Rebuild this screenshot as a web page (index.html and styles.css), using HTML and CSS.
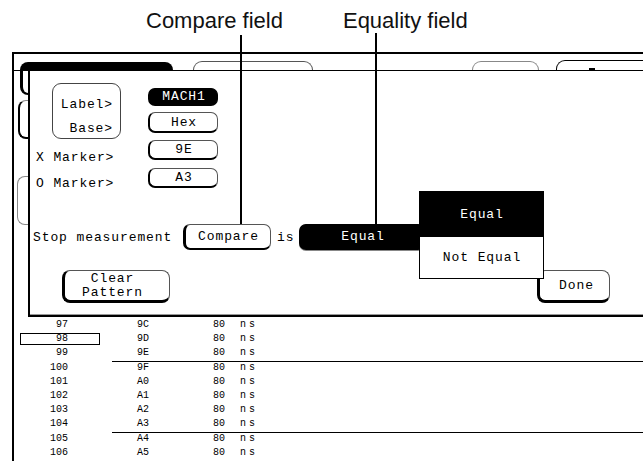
FILE: index.html
```html
<!DOCTYPE html>
<html>
<head>
<meta charset="utf-8">
<title>Stop measurement</title>
<link rel="stylesheet" href="styles.css">
</head>
<body>
<div class="page">
  <header class="callouts">
    <span class="callout">Compare field</span>
    <span class="callout callout-equality">Equality field</span>
  </header>
  <div class="pointer pointer-compare"></div>
  <div class="pointer pointer-equality"></div>
  <section class="screen">
    <div class="tabbar">
      <div class="tab tab-active"></div>
      <div class="tab tab-outline"></div>
      <div class="tab tab-faint"></div>
      <div class="tab tab-wide"><span class="tab-mark"></span></div>
    </div>
    <div class="main">
      <div class="side">
        <div class="side-btn side-1"></div>
        <div class="side-btn side-2"></div>
        <div class="side-btn side-3"></div>
      </div>
      <div class="dialog">
        <div class="fields">
          <div class="field-labels">
            <div class="labelbox">
              <div>Label&gt;</div>
              <div class="second">Base&gt;</div>
            </div>
            <div class="marker-label marker-x">X Marker&gt;</div>
            <div class="marker-label marker-o">O Marker&gt;</div>
          </div>
          <div class="field-values">
            <div class="btn btn-dark v-mach">MACH1</div>
            <div class="btn v-hex">Hex</div>
            <div class="btn v-x">9E</div>
            <div class="btn v-o">A3</div>
          </div>
        </div>
        <div class="stop-row">
          <span class="stop-text">Stop measurement</span>
          <div class="btn btn-compare">Compare</div>
          <span class="is-text">is</span>
          <div class="btn btn-dark btn-equal">Equal</div>
        </div>
        <div class="actions">
          <div class="btn btn-big btn-clear"><span class="btn-label">Clear<br>Pattern</span></div>
          <div class="btn btn-big btn-done">Done</div>
        </div>
        <div class="popup">
          <div class="popup-item selected">Equal</div>
          <div class="popup-item">Not Equal</div>
        </div>
      </div>
    </div>
    <div class="listing">
      <div class="row"><span class="num">97</span><span class="data"><span class="hex">9C</span><span class="t">80</span><span class="unit">ns</span></span></div>
      <div class="row cursor"><span class="num">98</span><span class="data"><span class="hex">9D</span><span class="t">80</span><span class="unit">ns</span></span></div>
      <div class="row mark"><span class="num">99</span><span class="data"><span class="hex">9E</span><span class="t">80</span><span class="unit">ns</span></span></div>
      <div class="row"><span class="num">100</span><span class="data"><span class="hex">9F</span><span class="t">80</span><span class="unit">ns</span></span></div>
      <div class="row"><span class="num">101</span><span class="data"><span class="hex">A0</span><span class="t">80</span><span class="unit">ns</span></span></div>
      <div class="row"><span class="num">102</span><span class="data"><span class="hex">A1</span><span class="t">80</span><span class="unit">ns</span></span></div>
      <div class="row"><span class="num">103</span><span class="data"><span class="hex">A2</span><span class="t">80</span><span class="unit">ns</span></span></div>
      <div class="row mark"><span class="num">104</span><span class="data"><span class="hex">A3</span><span class="t">80</span><span class="unit">ns</span></span></div>
      <div class="row"><span class="num">105</span><span class="data"><span class="hex">A4</span><span class="t">80</span><span class="unit">ns</span></span></div>
      <div class="row"><span class="num">106</span><span class="data"><span class="hex">A5</span><span class="t">80</span><span class="unit">ns</span></span></div>
    </div>
  </section>
</div>
</body>
</html>
```

FILE: styles.css
```css
* { box-sizing: border-box; margin: 0; padding: 0; }

body {
  background: #fff;
  width: 643px;
  height: 467px;
  overflow: hidden;
}

.page {
  position: relative;
  width: 643px;
  height: 467px;
  overflow: hidden;
  font-family: "Liberation Mono", "DejaVu Sans Mono", monospace;
  font-size: 13px;
  letter-spacing: 0.9px;
  color: #000;
}

/* annotations */
.callouts {
  height: 52px;
  display: flex;
  padding: 9px 0 0 146px;
  font-family: "Liberation Sans", Arial, sans-serif;
  font-size: 22px;
  line-height: 24px;
  letter-spacing: 0;
  color: #111;
}
.callout-equality { margin-left: 60px; }

.pointer {
  position: absolute;
  width: 2px;
  background: #000;
  z-index: 5;
}
.pointer-compare { left: 240px; top: 35px; height: 189px; }
.pointer-equality { left: 375px; top: 33px; height: 192px; }

/* analyzer screen */
.screen {
  margin-left: 12px;
  border-left: 2px solid #000;
  border-top: 2px solid #000;
  height: 409px;
}

.tabbar {
  height: 17px;
  border-bottom: 1px solid #000;
  display: flex;
  align-items: flex-end;
}
.tab { border-radius: 9px 9px 0 0; }
.tab-active {
  margin-left: 6px;
  width: 153px;
  height: 8px;
  background: #000;
}
.tab-outline {
  margin-left: 20px;
  width: 120px;
  height: 9px;
  border: 1px solid #555;
  border-bottom: 0;
}
.tab-faint {
  margin-left: 159px;
  width: 67px;
  height: 9px;
  border: 1px solid #888;
  border-bottom: 0;
}
.tab-wide {
  position: relative;
  margin-left: 17px;
  flex: 1;
  height: 10px;
  border: 1px solid #000;
  border-right: 0;
  border-bottom: 0;
  border-radius: 9px 0 0 0;
}
.tab-mark {
  position: absolute;
  left: 32px;
  top: 7px;
  width: 6px;
  height: 2px;
  background: #000;
}

.main {
  display: flex;
  height: 246px;
}

.side {
  width: 14px;
  flex: none;
}
.side-btn { border-radius: 8px 0 0 8px; }
.side-1 {
  margin-left: 6px;
  height: 24px;
  border-left: 3px solid #000;
  border-bottom: 2px solid #000;
  border-radius: 0 0 0 8px;
}
.side-2 {
  margin: 5px 0 0 4px;
  height: 39px;
  border-top: 1px solid #888;
  border-left: 2px solid #000;
  border-bottom: 2px solid #000;
}
.side-3 {
  margin: 37px 0 0 3px;
  height: 49px;
  border: 1px solid #888;
  border-right: 0;
}

/* dialog */
.dialog {
  flex: 1;
  position: relative;
  background: #fff;
  border-left: 2px solid #000;
  border-bottom: 2px solid #000;
  box-shadow: inset 0 -1px 0 #999;
}

.fields {
  display: flex;
  height: 117px;
}
.field-labels { width: 118px; }
.labelbox {
  margin: 12px 0 0 22px;
  width: 69px;
  height: 56px;
  border: 1px solid #444;
  border-radius: 9px;
  text-align: right;
  padding: 14px 7px 0 0;
  line-height: 14px;
}
.labelbox .second { margin-top: 10px; }

.marker-label {
  line-height: 14px;
  padding-left: 6px;
}
.marker-x { margin-top: 12px; }
.marker-o { margin-top: 12px; }

.field-values {
  width: 70px;
  padding-top: 17px;
}

.btn {
  display: flex;
  align-items: center;
  justify-content: center;
  padding: 1px 0 0 1px;
  line-height: 14px;
  background: #fff;
  border: 1px solid #555;
  border-left: 2px solid #000;
  border-bottom: 2px solid #000;
  border-radius: 7px;
}
.btn-dark {
  background: #000;
  color: #fff;
  border-color: #000;
}
.v-mach { height: 18px; }
.v-hex { margin-top: 6px; height: 21px; }
.v-x { margin-top: 7px; height: 20px; }
.v-o { margin-top: 8px; height: 20px; }

.stop-row {
  display: flex;
  align-items: center;
  margin-top: 36px;
  height: 26px;
}
.stop-text {
  width: 153px;
  padding: 1px 0 0 3px;
}
.btn-compare {
  width: 88px;
  height: 26px;
  border-left-width: 3px;
}
.is-text {
  width: 28px;
  padding: 1px 0 0 6px;
}
.btn-equal {
  width: 126px;
  height: 26px;
  box-shadow: 0 1px 0 #888;
}

.actions {
  display: flex;
  justify-content: space-between;
  margin-top: 20px;
  padding: 0 33px 0 32px;
}
.btn-big {
  height: 33px;
  border-left-width: 3px;
  border-bottom-width: 3px;
  border-radius: 8px;
}
.btn-clear {
  width: 108px;
  padding-right: 10px;
}
.btn-label {
  display: block;
  text-align: center;
  line-height: 14px;
  margin-top: -1px;
}
.btn-done {
  width: 73px;
  padding-left: 4px;
}

.popup {
  position: absolute;
  left: 389px;
  top: 120px;
  width: 125px;
  height: 88px;
  z-index: 3;
  display: flex;
  flex-direction: column;
  background: #fff;
  border: 1px solid #000;
}
.popup-item {
  display: flex;
  align-items: center;
  justify-content: center;
  padding-left: 1px;
  line-height: 14px;
  flex: 1;
}
.popup-item.selected {
  flex: none;
  height: 45px;
  background: #000;
  color: #fff;
}

/* state listing */
.listing { padding-top: 1px; }
.row {
  display: grid;
  grid-template-columns: 80px 1fr;
  column-gap: 12px;
  padding-left: 6px;
  height: 14.2px;
  font-size: 10px;
  line-height: 14.2px;
  letter-spacing: 0;
}
.num {
  text-align: right;
  padding-right: 32px;
}
.row.cursor .num {
  margin: 1px 0;
  line-height: 12.2px;
  box-shadow: inset 0 0 0 1px #000;
}
.data { display: flex; }
.row.mark .data { border-bottom: 1px solid #000; }
.hex {
  width: 101px;
  padding-left: 25px;
}
.t { width: 27px; }
.unit { letter-spacing: 3px; }
```
